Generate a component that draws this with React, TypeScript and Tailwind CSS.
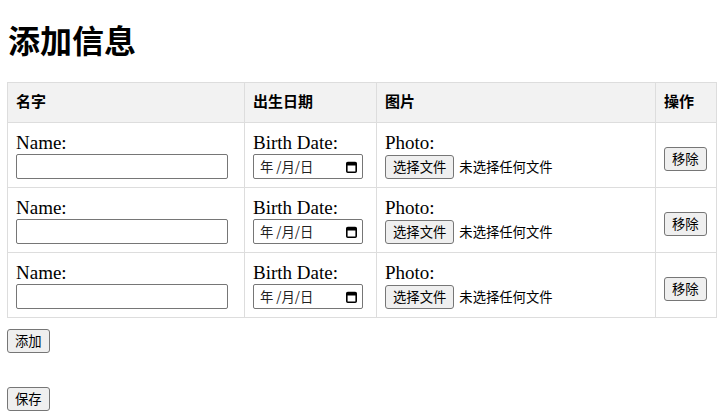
import React from "react";

const serif = { fontFamily: '"Liberation Serif", "Noto Sans CJK SC", serif' };
const ui = { fontFamily: '"Noto Sans CJK SC", "Noto Sans", sans-serif' };

function NativeButton({ children }: { children: React.ReactNode }) {
  return (
    <button
      type="button"
      className="border border-[#767676] bg-[#efefef] rounded-[3px] px-[7px] h-[24px] text-[13.33px] leading-[16px] text-black"
      style={ui}
    >
      {children}
    </button>
  );
}

const cell = "border border-[#dddddd] px-[8px] py-[8px] align-middle";
const head = "border border-[#dddddd] px-[8px] py-[8px] text-left text-[15px] leading-[23px] font-bold";

function Row() {
  return (
    <tr>
      <td className={cell}>
        <div className="text-[19px] leading-[23px]">Name:</div>
        <input
          type="text"
          className="block w-[212px] h-[25px] border border-[#767676] rounded-[2px] bg-white px-[2px]"
        />
      </td>
      <td className={cell}>
        <div className="text-[19px] leading-[23px]">Birth Date:</div>
        <div
          className="flex items-center w-[110px] h-[25px] border border-[#767676] rounded-[2px] bg-white pl-[6px] pr-[5px] text-[13.33px]"
          style={ui}
        >
          <span className="text-[#222]">年 /月/日</span>
          <svg className="ml-auto" width="11" height="12" viewBox="0 0 11 12">
            <rect x="0.8" y="1.5" width="9.4" height="9.7" rx="1" fill="none" stroke="#000" strokeWidth="1.6" />
            <rect x="0.8" y="1.5" width="9.4" height="3" fill="#000" />
          </svg>
        </div>
      </td>
      <td className={cell}>
        <div className="text-[19px] leading-[23px]">Photo:</div>
        <div className="flex items-center h-[25px] text-[13.33px]" style={ui}>
          <NativeButton>选择文件</NativeButton>
          <span className="ml-[5px]">未选择任何文件</span>
        </div>
      </td>
      <td className={cell}>
        <div className="flex mt-[8px]">
          <NativeButton>移除</NativeButton>
        </div>
      </td>
    </tr>
  );
}

export default function App() {
  return (
    <div className="bg-white text-black min-h-[413px] pl-[7px] pt-[8px]" style={serif}>
      <h1
        className="text-[32px] font-bold leading-[37px] mt-[13px] mb-[24px] pl-[1px]"
        style={{ fontFamily: '"Noto Sans CJK SC", serif' }}
      >
        添加信息
      </h1>
      <table className="w-[710px] border-collapse">
        <thead>
          <tr className="bg-[#f2f2f2]">
            <th className={`${head} w-[237px]`}>名字</th>
            <th className={`${head} w-[132px]`}>出生日期</th>
            <th className={`${head} w-[279px]`}>图片</th>
            <th className={head}>操作</th>
          </tr>
        </thead>
        <tbody>
          <Row />
          <Row />
          <Row />
        </tbody>
      </table>
      <div className="flex mt-[11px]">
        <NativeButton>添加</NativeButton>
      </div>
      <div className="flex mt-[34px]">
        <NativeButton>保存</NativeButton>
      </div>
    </div>
  );
}
